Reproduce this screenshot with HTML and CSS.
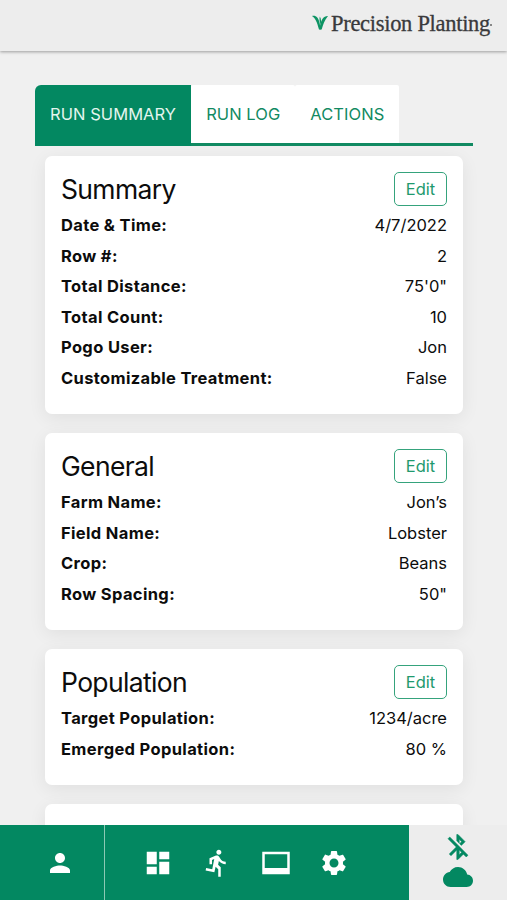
FILE: index.html
```html
<!DOCTYPE html>
<html lang="en">
<head>
  <meta charset="utf-8">
  <meta name="viewport" content="width=device-width, initial-scale=1">
  <title>Run Summary</title>
  <link rel="stylesheet" href="styles.css">
</head>
<body>
<div class="app">
  <header class="header">
    <div class="logo">
      <svg class="logo-leaf" viewBox="0 0 16 15">
        <path d="M0 1C4 .2 6.300 2.500 7.600 8L8.800 14.500H7C5.600 10 4.600 4 0 1z"/>
        <path d="M16 1C11.500 .8 9 5 8 11L7.600 14.500H9.700C11 10 12.500 5 16 1z"/>
        <path d="M7.800 1.500C9.200 4 9.400 6 8.500 9.500C7.600 6.500 7.200 4.500 7.800 1.500z"/>
      </svg>
      <span class="logo-text">Precision Planting</span><span class="logo-dot"></span>
    </div>
  </header>

  <main class="content">
    <ul class="tabs">
      <li class="active">RUN SUMMARY</li>
      <li>RUN LOG</li>
      <li>ACTIONS</li>
    </ul>

    <div class="cards">
      <section class="card">
        <div class="card-head">
          <h2>Summary</h2>
          <button class="edit">Edit</button>
        </div>
        <dl>
          <div class="row"><dt>Date &amp; Time:</dt><dd>4/7/2022</dd></div>
          <div class="row"><dt>Row #:</dt><dd>2</dd></div>
          <div class="row"><dt>Total Distance:</dt><dd>75'0"</dd></div>
          <div class="row"><dt>Total Count:</dt><dd>10</dd></div>
          <div class="row"><dt>Pogo User:</dt><dd>Jon</dd></div>
          <div class="row"><dt>Customizable Treatment:</dt><dd>False</dd></div>
        </dl>
      </section>

      <section class="card">
        <div class="card-head">
          <h2>General</h2>
          <button class="edit">Edit</button>
        </div>
        <dl>
          <div class="row"><dt>Farm Name:</dt><dd>Jon’s</dd></div>
          <div class="row"><dt>Field Name:</dt><dd>Lobster</dd></div>
          <div class="row"><dt>Crop:</dt><dd>Beans</dd></div>
          <div class="row"><dt>Row Spacing:</dt><dd>50"</dd></div>
        </dl>
      </section>

      <section class="card">
        <div class="card-head">
          <h2>Population</h2>
          <button class="edit">Edit</button>
        </div>
        <dl>
          <div class="row"><dt>Target Population:</dt><dd>1234/acre</dd></div>
          <div class="row"><dt>Emerged Population:</dt><dd>80 %</dd></div>
        </dl>
      </section>

      <section class="card card-next"></section>
    </div>
  </main>

  <footer class="footer">
    <div class="user">
      <svg class="icon" viewBox="0 0 24 24"><path d="M12 12c2.210 0 4-1.790 4-4s-1.790-4-4-4-4 1.790-4 4 1.790 4 4 4zm0 2c-2.670 0-8 1.340-8 4v2h16v-2c0-2.660-5.330-4-8-4z"/></svg>
    </div>
    <nav class="nav">
      <svg class="icon" viewBox="0 0 24 24"><path d="M3 13h8V3H3v10zm0 8h8v-6H3v6zm10 0h8V11h-8v10zm0-18v6h8V3h-8z"/></svg>
      <svg class="icon" viewBox="0 0 24 24"><path d="M13.490 5.480c1.100 0 2-.9 2-2s-.9-2-2-2-2 .9-2 2 .9 2 2 2zm-3.600 13.900l1-4.400 2.100 2v6h2v-7.500l-2.100-2 .6-3c1.300 1.500 3.300 2.500 5.500 2.500v-2c-1.900 0-3.500-1-4.300-2.400l-1-1.600c-.4-.6-1-1-1.700-1-.3 0-.5.1-.8.1l-5.200 2.200v4.700h2v-3.400l1.800-.7-1.600 8.100-4.900-1-.4 2 7 1.400z"/></svg>
      <svg class="icon" viewBox="0 0 24 24"><path d="M23 3H1v18h22V3zm-2 13H3V5h18v11z"/></svg>
      <svg class="icon" viewBox="0 0 24 24"><path d="M19.140 12.940c.04-.3.060-.61.060-.94 0-.32-.02-.64-.07-.94l2.030-1.580c.18-.14.230-.41.120-.61l-1.920-3.320c-.12-.22-.37-.29-.59-.22l-2.390.96c-.5-.38-1.030-.7-1.620-.94l-.36-2.540c-.04-.24-.24-.41-.48-.41h-3.840c-.24 0-.43.17-.47.410l-.36 2.540c-.59.240-1.130.570-1.620.940l-2.390-.96c-.22-.08-.47 0-.59.220L2.740 8.870c-.12.210-.08.470.12.610l2.030 1.580c-.05.3-.09.630-.09.940s.02.640.07.940l-2.030 1.580c-.18.140-.23.410-.12.610l1.920 3.320c.12.220.37.290.59.220l2.390-.96c.5.380 1.030.7 1.620.940l.36 2.540c.05.240.24.410.48.410h3.840c.24 0 .44-.17.470-.41l.36-2.540c.59-.24 1.130-.56 1.620-.94l2.390.96c.22.080.47 0 .59-.22l1.920-3.320c.12-.22.070-.47-.12-.61l-2.010-1.580zM12 15.600c-1.980 0-3.600-1.620-3.600-3.600s1.620-3.600 3.600-3.600 3.600 1.620 3.600 3.600-1.620 3.600-3.600 3.600z"/></svg>
    </nav>
    <div class="status">
      <svg class="icon icon-bt" viewBox="0 0 24 24"><path d="M13 5.830l1.880 1.880-1.600 1.600 1.410 1.410 3.020-3.020L12 2h-1v5.030l2 2v-3.200zM5.410 4L4 5.410 10.590 12 5 17.590 6.410 19 11 14.410V22h1l4.290-4.290 2.300 2.290L20 18.590 5.410 4zM13 18.170v-3.760l1.880 1.880L13 18.170z"/></svg>
      <svg class="icon" viewBox="0 0 24 24"><path d="M19.350 10.040C18.670 6.590 15.640 4 12 4 9.110 4 6.600 5.640 5.350 8.040 2.340 8.360 0 10.910 0 14c0 3.310 2.690 6 6 6h13c2.760 0 5-2.240 5-5 0-2.640-2.050-4.780-4.650-4.960z"/></svg>
    </div>
  </footer>
</div>
</body>
</html>
```
FILE: styles.css
```css
* {
  box-sizing: border-box;
}
body,
ul,
dl,
dd,
h2 {
  margin: 0;
  padding: 0;
}
body {
  background: #f0f0f0;
  color: #0c0c0c;
  font: 16.5px/30.6px Inter, "Liberation Sans", sans-serif;
}
.app {
  display: flex;
  flex-direction: column;
  height: 100vh;
  overflow: hidden;
}

/* header */
.header {
  flex: none;
  display: flex;
  justify-content: flex-end;
  height: 51px;
  padding: 9px 15px 0 0;
  background: #ededed;
  box-shadow: 0 1px 3px rgba(0, 0, 0, .35);
}
.logo {
  display: flex;
  height: 30px;
}
.logo-leaf {
  width: 16px;
  height: 15px;
  margin: 6px 3px 0 0;
  fill: #0d9464;
}
.logo-text {
  color: #3a3a3c;
  font: 22.5px/30px "Liberation Serif", serif;
  letter-spacing: -.3px;
  white-space: nowrap;
  -webkit-text-stroke: .3px #3a3a3c;
}
.logo-dot {
  width: 2px;
  height: 2px;
  margin-top: 15px;
  background: #888;
}

/* tabs */
.content {
  flex: 1;
  min-height: 0;
  padding: 34px 34px 0 35px;
  overflow: hidden;
}
.tabs {
  display: flex;
  height: 61px;
  border-bottom: 3px solid #118a62;
  list-style: none;
}
.tabs li {
  height: 58px;
  padding: 0 15px;
  background: #fff;
  color: #118a62;
  line-height: 58px;
  letter-spacing: .06px;
  white-space: nowrap;
  border-radius: 2px 2px 0 0;
}
.tabs .active {
  height: 61px;
  background: #038861;
  color: #e4f5ee;
  border-radius: 6px 0 0 0;
}

/* cards */
.cards {
  display: flex;
  flex-direction: column;
  gap: 19.3px;
  padding: 10px 10px 0;
}
.card {
  flex: none;
  padding: 16px 16px 20.4px;
  background: #fff;
  border-radius: 7px;
  box-shadow: 0 4px 18px rgba(0, 0, 0, .07);
}
.card-next {
  height: 150px;
}
.card-head {
  display: flex;
  justify-content: space-between;
  height: 38px;
}
.card-head h2 {
  font-size: 26.5px;
  font-weight: 400;
  line-height: 34px;
  letter-spacing: -.65px;
}
.edit {
  width: 53px;
  height: 34px;
  padding: 0;
  border: 1.5px solid #35a37c;
  border-radius: 5px;
  background: #fff;
  color: #1f9a6e;
  font: inherit;
  line-height: 30px;
}
.row {
  display: flex;
  justify-content: space-between;
}
.row dt {
  font-weight: 700;
  letter-spacing: .35px;
}

/* bottom bar */
.footer {
  flex: none;
  display: flex;
  height: 75px;
  background: #ededed;
}
.icon {
  display: block;
  width: 30px;
  height: 30px;
  fill: #fff;
}
.user {
  width: 105px;
  padding: 22.500px 0 0 44.500px;
  background: #038861;
  border-right: 1px solid #8cc9b4;
}
.nav {
  display: flex;
  gap: 28.600px;
  width: 304px;
  padding: 22.500px 0 0 38.400px;
  background: #038861;
}
.status {
  flex: 1;
  padding: 7.400px 0 0 34px;
}
.status .icon {
  fill: #038861;
}
.icon-bt {
  stroke: #038861;
  stroke-width: .4;
}
```
